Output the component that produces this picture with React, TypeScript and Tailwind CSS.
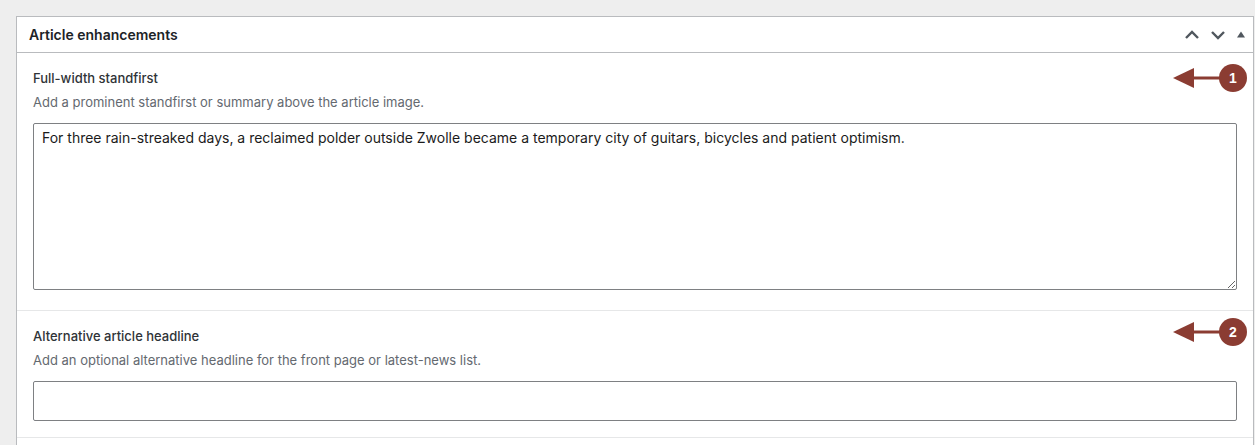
import { useState } from 'react'

type CalloutProps = {
  number: number
  className: string
}

// Arrow with a numbered badge, pointing at the field it explains
function Callout({ number, className }: CalloutProps) {
  return (
    <div className={`absolute right-1.5 flex items-center ${className}`}>
      <svg width="48" height="22" viewBox="0 0 48 22" fill="none" className="-mr-0.5">
        <path d="M18 11H48" stroke="#8b3c32" strokeWidth="3" />
        <path d="M0 11L21 1V21Z" fill="#8b3c32" />
      </svg>
      <span className="flex h-7 w-7 items-center justify-center rounded-full bg-[#8b3c32] font-['Liberation_Sans',sans-serif] text-sm font-bold text-white">
        {number}
      </span>
    </div>
  )
}

type FieldProps = {
  id: string
  label: string
  description: string
  callout: React.ReactNode
  children: React.ReactNode
}

function Field({ id, label, description, callout, children }: FieldProps) {
  return (
    <div className="relative border-b border-[#e6e7e8] p-4">
      <label htmlFor={id} className="block text-[13px] leading-[18px] font-medium text-[#2f3337]">
        {label}
      </label>
      <p id={`${id}-description`} className="mt-1.5 mb-3 text-[13px] leading-[18px] text-[#646970]">
        {description}
      </p>
      {children}
      {callout}
    </div>
  )
}

export default function App() {
  const [isOpen, setIsOpen] = useState(true)
  const [standfirst, setStandfirst] = useState(
    'For three rain-streaked days, a reclaimed polder outside Zwolle became a temporary city of guitars, bicycles and patient optimism.'
  )
  const [headline, setHeadline] = useState('')

  return (
    <div className="flex min-h-screen flex-col bg-[#eeeeee] pt-4 pr-px pl-4 font-['Inter',sans-serif]">
      <section className="flex-1 border-x border-t border-[#b9bbbe] bg-white">
        {/* Header */}
        <div className="flex h-9 items-center justify-between border-b border-[#b9bbbe] pr-2 pl-3">
          <h2 className="text-sm font-semibold text-[#1d2327]">Article enhancements</h2>
          <div className="flex items-center gap-3 text-[#50575e]">
            <button type="button" aria-label="Move up">
              <svg width="14" height="10" viewBox="0 0 14 10" fill="none" stroke="currentColor" strokeWidth="2.4">
                <path d="M1 8L7 2L13 8" />
              </svg>
            </button>
            <button type="button" aria-label="Move down">
              <svg width="14" height="10" viewBox="0 0 14 10" fill="none" stroke="currentColor" strokeWidth="2.4">
                <path d="M1 2L7 8L13 2" />
              </svg>
            </button>
            <button
              type="button"
              aria-label="Toggle panel"
              aria-expanded={isOpen}
              onClick={() => setIsOpen(!isOpen)}
              className={isOpen ? '' : 'rotate-180'}
            >
              <svg width="8" height="8" viewBox="0 0 8 8" fill="currentColor">
                <path d="M4 0.5L8 6.5H0Z" />
              </svg>
            </button>
          </div>
        </div>

        {/* Fields */}
        {isOpen && (
          <>
            <Field
              id="standfirst"
              label="Full-width standfirst"
              description="Add a prominent standfirst or summary above the article image."
              callout={<Callout number={1} className="top-[11px]" />}
            >
              <textarea
                id="standfirst"
                aria-describedby="standfirst-description"
                value={standfirst}
                onChange={(e) => setStandfirst(e.target.value)}
                className="mb-1 block h-[167px] w-full resize-y rounded-xs border border-[#7e8083] px-2 py-1 text-sm text-[#1b1b1b]"
              />
            </Field>
            <Field
              id="headline"
              label="Alternative article headline"
              description="Add an optional alternative headline for the front page or latest-news list."
              callout={<Callout number={2} className="top-[7px]" />}
            >
              <input
                id="headline"
                type="text"
                aria-describedby="headline-description"
                value={headline}
                onChange={(e) => setHeadline(e.target.value)}
                className="block h-10 w-full rounded-xs border border-[#7e8083] px-2 text-sm text-[#1b1b1b]"
              />
            </Field>
          </>
        )}
      </section>
    </div>
  )
}
